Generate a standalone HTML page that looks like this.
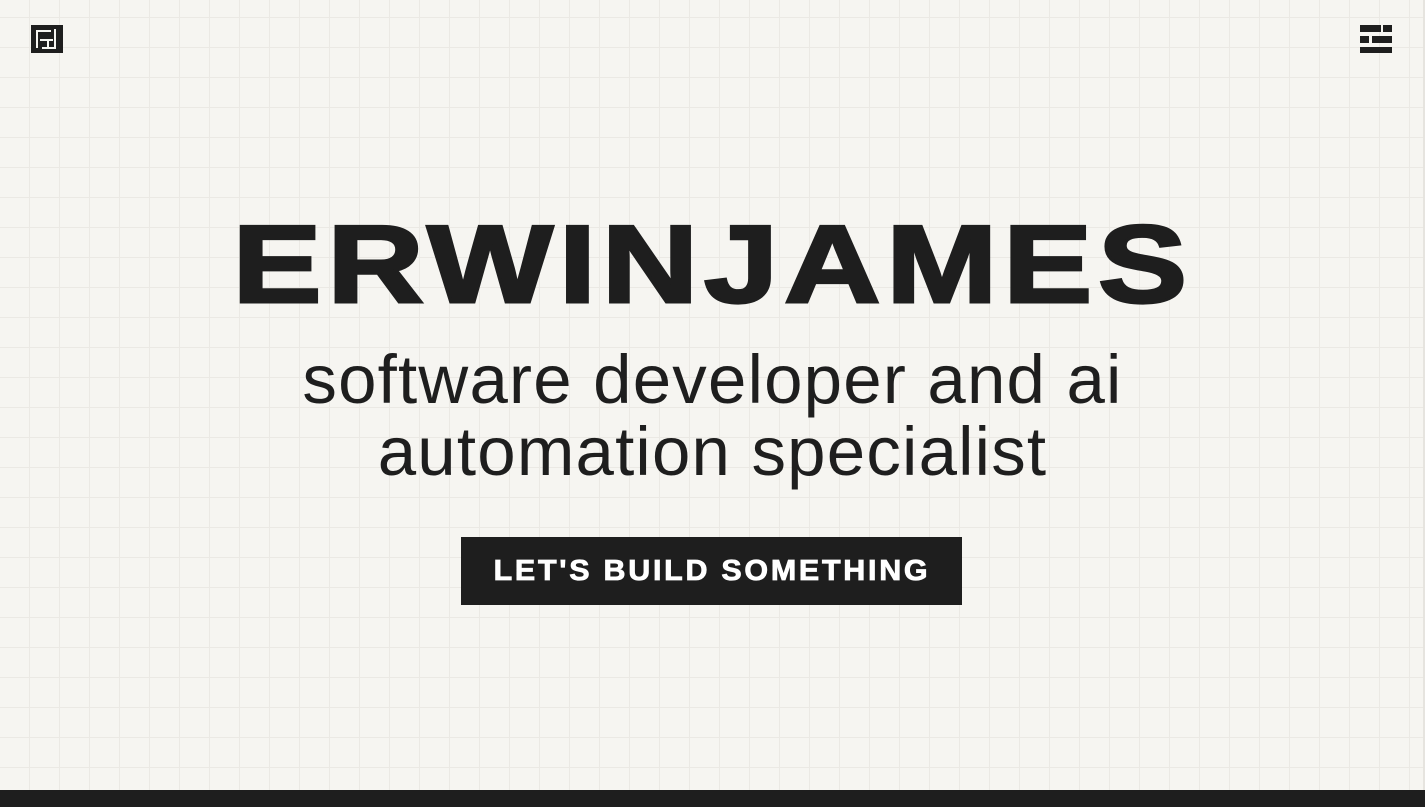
<!DOCTYPE html>
<html><head><style>
html,body{margin:0;padding:0}
body{width:1425px;height:807px;overflow:hidden;position:relative;background-color:#f6f5f1;
background-image:linear-gradient(to right,#ebe9e4 1px,transparent 1px),linear-gradient(to bottom,#ebe9e4 1px,transparent 1px);
background-size:30px 30px;background-position:29px 17px;font-family:"Liberation Sans",sans-serif;color:#1e1e1e}
.logo{position:absolute;left:31px;top:25px}
.menu{position:absolute;left:1360px;top:25px}
h1{position:absolute;left:0;width:1425px;top:195px;margin:0;text-align:center;font-size:110px;font-weight:900;line-height:140px;letter-spacing:5px}
h1 span{display:inline-block;transform:scaleX(1.21);-webkit-text-stroke:3px #1e1e1e}
.sub{position:absolute;left:0;width:1425px;top:344px;text-align:center;font-size:69px;line-height:72px;letter-spacing:1.2px}
.btn{position:absolute;left:461px;top:537px;width:501px;height:68px;background:#1e1e1e;color:#fff;font-weight:900;font-size:29px;letter-spacing:2.6px;text-align:center;line-height:68px}
.btn span{display:inline-block;transform:scaleX(1.05);-webkit-text-stroke:0.8px #fff}
.foot{position:absolute;left:0;top:790px;width:1425px;height:17px;background:#1e1e1e}
.edge{position:absolute;right:0;top:0;width:2px;height:790px;background:#e6e4df}
</style></head><body>
<svg class="logo" width="32" height="28" viewBox="0 0 32 28">
<rect width="32" height="28" fill="#1e1e1e"/>
<path d="M5 6H20M6 6V23M9 15H22M17 15V23M24 4V24M11 23H25" stroke="#f6f5f1" stroke-width="2" fill="none"/>
</svg>
<svg class="menu" width="32" height="28" viewBox="0 0 32 28">
<rect x="0" y="0" width="21" height="7" fill="#1e1e1e"/><rect x="23" y="0" width="9" height="7" fill="#1e1e1e"/>
<rect x="0" y="11" width="9" height="7" fill="#1e1e1e"/><rect x="12" y="11" width="20" height="7" fill="#1e1e1e"/>
<rect x="0" y="22" width="32" height="6" fill="#1e1e1e"/>
</svg>
<h1><span>ERWINJAMES</span></h1>
<div class="sub">software developer and ai<br>automation specialist</div>
<div class="btn"><span>LET'S BUILD SOMETHING</span></div>
<div class="edge"></div>
<div class="foot"></div>
</body></html>
